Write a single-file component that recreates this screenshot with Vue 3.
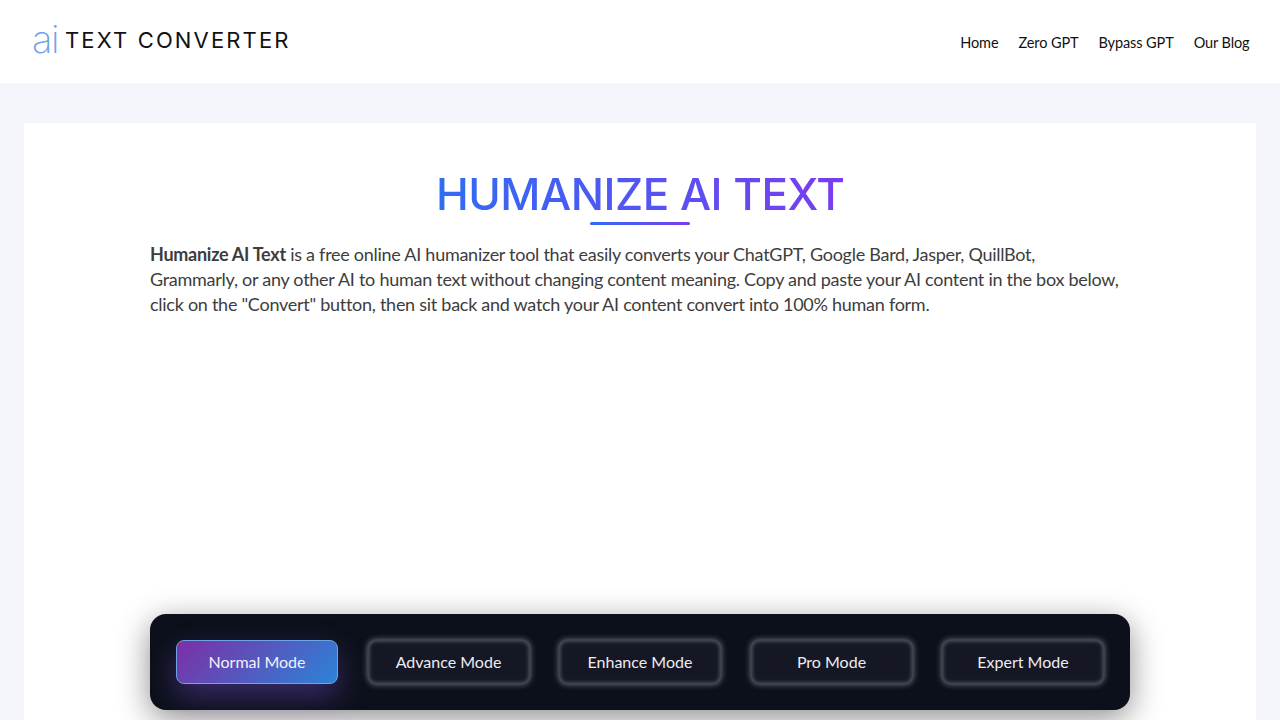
<template>
  <div class="page">
    <header class="site-header">
      <a class="logo">
        <span class="logo-ai">ai</span>
        <span class="logo-text">TEXT CONVERTER</span>
      </a>
      <nav class="nav">
        <a v-for="link in links" :key="link">{{ link }}</a>
      </nav>
    </header>

    <main class="card">
      <div class="content">
        <h1 class="title">HUMANIZE AI TEXT</h1>
        <div class="title-line"></div>
        <p class="intro">
          <strong>Humanize AI Text</strong> is a free online AI humanizer tool that easily converts your ChatGPT, Google Bard, Jasper, QuillBot, Grammarly, or any other AI to human text without changing content meaning. Copy and paste your AI content in the box below, click on the "Convert" button, then sit back and watch your AI content convert into 100% human form.
        </p>
        <div class="ad-space"></div>
        <div class="modes">
          <button
            v-for="mode in modes"
            :key="mode"
            class="mode-btn"
            :class="{ active: mode === activeMode }"
            @click="activeMode = mode"
          >
            {{ mode }}
          </button>
        </div>
      </div>
    </main>
  </div>
</template>

<script setup>
import { ref } from 'vue'

const links = ['Home', 'Zero GPT', 'Bypass GPT', 'Our Blog']
const modes = ['Normal Mode', 'Advance Mode', 'Enhance Mode', 'Pro Mode', 'Expert Mode']
const activeMode = ref('Normal Mode')
</script>

<style>
html, body {
  margin: 0;
  height: 100%;
  overflow: hidden;
  background: #f4f5fa;
}
</style>

<style scoped>
.page {
  height: 720px;
  overflow: hidden;
  background: #f4f5fa;
  font-family: Lato, "Noto Sans", sans-serif;
}
/* Header */
.site-header {
  display: flex;
  align-items: center;
  justify-content: space-between;
  height: 83px;
  padding: 0 30px 0 32px;
  background: #fff;
}
.logo {
  display: flex;
  align-items: center;
  gap: 7px;
  margin-top: -5px;
}
.logo-ai {
  font-family: Inter, sans-serif;
  font-weight: 200;
  font-size: 38px;
  line-height: 40px;
  color: #6ea2ea;
  letter-spacing: -1.5px;
}
.logo-text {
  margin-top: 1px;
  font-family: Inter, sans-serif;
  font-size: 22px;
  line-height: 26px;
  font-weight: 400;
  letter-spacing: 2.15px;
  white-space: nowrap;
  color: #111;
}
.nav {
  display: flex;
  gap: 20px;
  margin-top: 2px;
  margin-right: 0.5px;
}
.nav a {
  font-size: 14.5px;
  letter-spacing: -0.1px;
  color: #111;
}
/* Card */
.card {
  margin: 40px 24px 0;
  height: 640px;
  background: #fff;
  box-sizing: border-box;
  padding-top: 40px;
}
.content {
  width: 980px;
  margin: 0 auto;
}
.title {
  width: 408px;
  margin: 0 auto;
  text-align: center;
  font-family: Inter, sans-serif;
  font-size: 44px;
  line-height: 62px;
  font-weight: 500;
  letter-spacing: -0.5px;
  background: linear-gradient(90deg, #2f6df3, #7a3cf0);
  background-clip: text;
  -webkit-background-clip: text;
  color: transparent;
  white-space: nowrap;
}
.title-line {
  width: 100px;
  height: 3px;
  margin: -3px auto 0;
  border-radius: 2px;
  background: linear-gradient(90deg, #2f6df3, #7a3cf0);
}
.intro {
  width: 972px;
  margin: 17px 0 0;
  font-size: 18px;
  line-height: 25px;
  letter-spacing: -0.27px;
  color: #3d3d3d;
}
.intro strong {
  font-weight: 700;
}
.ad-space {
  height: 297px;
}
/* Mode switcher */
.modes {
  display: flex;
  justify-content: space-between;
  box-sizing: border-box;
  height: 96px;
  padding: 26px 26px;
  border-radius: 16px;
  background: #0c101a;
  box-shadow: 0 8px 32px rgba(0, 0, 0, 0.45);
}
.mode-btn {
  width: 162px;
  height: 44px;
  padding: 0 0 2px;
  border: none;
  border-radius: 8px;
  background: #151824;
  color: #ececf2;
  font-family: inherit;
  font-size: 16px;
  box-shadow: 0 0 6px rgba(200, 205, 220, 0.6), inset 0 0 4px 1px rgba(200, 205, 220, 0.4);
  cursor: pointer;
}
.mode-btn.active {
  background: linear-gradient(135deg, #7d2fa6, #2b84d8);
  border: 1px solid #6fa5e6;
  color: #f2f0fa;
  box-shadow: 0 12px 30px rgba(120, 80, 220, 0.42);
}
</style>
